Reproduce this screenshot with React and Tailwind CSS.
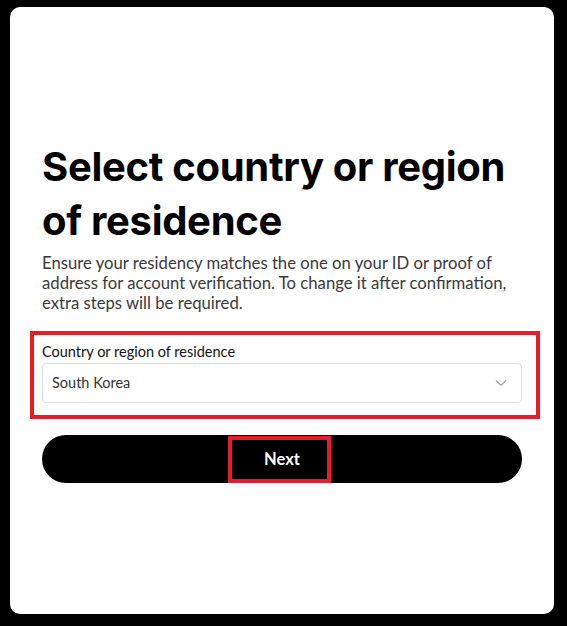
import React from "react";

export default function App() {
  return (
    <div className="min-h-screen w-full bg-black pt-[7px] pl-[10px]" style={{ fontFamily: "Inter, 'Noto Sans', sans-serif" }}>
      <div className="relative w-[544px] h-[607px] bg-white rounded-[10px] px-8 pt-[133px]">
        {/* Heading */}
        <h1 className="text-[40px] leading-[54px] font-bold text-black tracking-[-0.3px]">
          Select country or region of residence
        </h1>
        <p className="mt-[5px] text-[16.7px] leading-[20px] text-[#3a3a3a] font-['Lato',sans-serif]">
          Ensure your residency matches the one on your ID or proof of address for account verification. To change it after confirmation, extra steps will be required.
        </p>

        {/* Field */}
        <div className="mt-[29px]">
          <label className="block text-[14.5px] leading-[20px] text-[#111] font-['Lato',sans-serif]">
            Country or region of residence
          </label>
          <div className="mt-px h-[40px] border border-[#dedede] rounded-[4px] flex items-center justify-between pl-[9px] pr-[14px]">
            <span className="text-[14.5px] text-[#333] font-['Lato',sans-serif]">South Korea</span>
            <svg width="12" height="8" viewBox="0 0 12 8" fill="none">
              <path d="M1 1.5L6 6.5L11 1.5" stroke="#9aa0a8" strokeWidth="1.2" />
            </svg>
          </div>
        </div>

        {/* Button */}
        <button className="mt-[32px] w-full h-[48px] rounded-full bg-black text-white text-[16.5px] font-bold flex items-center justify-center font-['Lato',sans-serif]">
          Next
        </button>

        {/* Annotation boxes */}
        <div className="absolute left-[20px] top-[324px] w-[510px] h-[88px] border-[4px] border-[#e81c27] pointer-events-none" />
        <div className="absolute left-[218px] top-[429px] w-[103px] h-[47px] border-[4px] border-[#e81c27] pointer-events-none" />
      </div>
    </div>
  );
}
